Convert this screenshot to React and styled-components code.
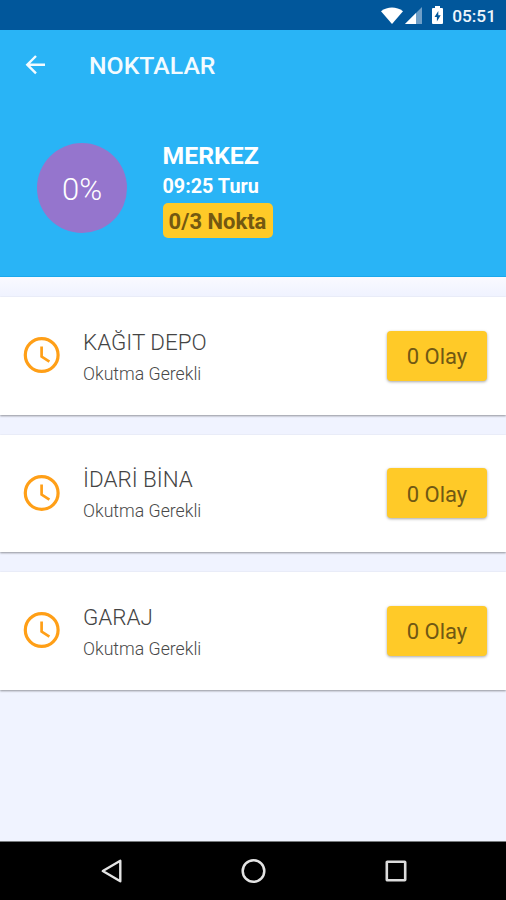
import styled, { createGlobalStyle } from 'styled-components';

const GlobalStyle = createGlobalStyle`
  * {
    box-sizing: border-box;
  }
  body {
    margin: 0;
    font-family: Roboto, 'Liberation Sans', sans-serif;
  }
`;

const Screen = styled.div`
  display: flex;
  flex-direction: column;
  width: 506px;
  height: 900px;
  overflow: hidden;
  background-color: #f0f3ff;
`;

const StatusBar = styled.div`
  display: flex;
  flex: none;
  align-items: center;
  justify-content: flex-end;
  height: 30px;
  padding: 0 10px 0 0;
  background-color: #01579b;
`;

const StatusIcon = styled.svg`
  display: block;
  margin-right: ${({ $gap }) => $gap}px;
`;

const StatusTime = styled.span`
  padding-top: 2px;
  font-size: 17.3px;
  font-weight: 500;
  line-height: 20px;
  color: #eef5fb;
`;

const Header = styled.header`
  flex: none;
  height: 247px;
  background-color: #29b4f6;
  border-bottom: 1px solid #1ba8ec;
`;

const Toolbar = styled.div`
  display: flex;
  align-items: center;
  height: 70px;
  padding-left: 25px;
`;

const Title = styled.h1`
  margin: 1px 0 0 43px;
  font-size: 24.8px;
  font-weight: 500;
  line-height: 28px;
  color: #f3fbff;
`;

const Summary = styled.div`
  display: flex;
  padding: 42px 0 0 37px;
`;

const Percent = styled.div`
  display: flex;
  align-items: center;
  justify-content: center;
  width: 90px;
  height: 90px;
  margin-top: 1px;
  padding-top: 2px;
  border-radius: 50%;
  background-color: #9575cd;
  font-size: 31px;
  font-weight: 300;
  color: #fff;
`;

const Tour = styled.div`
  display: flex;
  flex-direction: column;
  align-items: flex-start;
  margin-left: 35.5px;
`;

const Place = styled.div`
  font-size: 24.8px;
  font-weight: 700;
  line-height: 28px;
  color: #fff;
`;

const TourTime = styled.div`
  margin: 5px 0 4px;
  font-size: 19.8px;
  font-weight: 700;
  line-height: 24px;
  color: #fff;
`;

const Badge = styled.div`
  width: 110px;
  height: 35px;
  border-radius: 5px;
  background-color: #ffca28;
  font-size: 22px;
  font-weight: 700;
  line-height: 37px;
  text-align: center;
  color: #745811;
`;

const List = styled.main`
  display: flex;
  flex: 1;
  flex-direction: column;
  gap: 20px;
  padding-top: 20px;
  background: linear-gradient(#fafaff 0, #f0f3ff 18px);
`;

const Card = styled.div`
  display: flex;
  flex: none;
  align-items: center;
  height: 117.5px;
  padding: 0 19px 0 23px;
  background-color: #fff;
  box-shadow: 0 1px 2px rgba(0, 0, 0, 0.4);
`;

const CardText = styled.div`
  flex: 1;
  margin: 2px 0 0 23px;
`;

const CardTitle = styled.div`
  font-size: 22.4px;
  font-weight: 300;
  line-height: 28px;
  color: #444;
`;

const CardNote = styled.div`
  margin-top: 6px;
  font-size: 17.7px;
  font-weight: 300;
  line-height: 24px;
  color: #4a4a4a;
`;

const EventButton = styled.button`
  width: 100px;
  height: 50px;
  padding: 2px 0 0;
  border: none;
  border-radius: 4px;
  background-color: #ffca28;
  box-shadow: 0 1px 3px rgba(0, 0, 0, 0.35);
  font-family: inherit;
  font-size: 22px;
  color: #705814;
`;

const NavBar = styled.nav`
  display: flex;
  flex: none;
  align-items: center;
  justify-content: space-between;
  height: 59px;
  padding: 0 98px 0 99px;
  border-top: 1px solid #777b7d;
  background-color: #000;
`;

const points = [
  { name: 'KAĞIT DEPO', note: 'Okutma Gerekli', events: 0 },
  { name: 'İDARİ BİNA', note: 'Okutma Gerekli', events: 0 },
  { name: 'GARAJ', note: 'Okutma Gerekli', events: 0 },
];

const BackArrow = () => (
  <svg width="21" height="20" viewBox="0 0 21 20" fill="none" stroke="#f3fbff" strokeWidth="2.4">
    <path d="M20 9.7H2M11 1L2.3 9.7l8.7 8.7" />
  </svg>
);

const Clock = () => (
  <svg width="37" height="37" viewBox="0 0 37 37" fill="none" stroke="#ff9f17">
    <circle cx="18.7" cy="18" r="16.4" strokeWidth="3.2" />
    <path d="M18.6 9.4v10.2l7.8 5" strokeWidth="2.7" />
  </svg>
);

const StatusIcons = () => (
  <>
    <StatusIcon $gap={2} width="22" height="17" viewBox="0 0 22 17" fill="#fff">
      <path d="M0 4.2C6.5-.6 15.5-.6 22 4.2L11 17z" />
    </StatusIcon>
    <StatusIcon $gap={10} width="17" height="17" viewBox="0 0 17 17">
      <path d="M0 17L17 0v17z" fill="#6f9fc8" />
      <path d="M0 17L11 6v11z" fill="#fff" />
    </StatusIcon>
    <StatusIcon $gap={9} width="11" height="18" viewBox="0 0 11 18">
      <path d="M3 2V0h5v2h2q1 0 1 1v14q0 1-1 1H1q-1 0-1-1V3q0-1 1-1z" fill="#fff" />
      <path d="M6.3 5L2.5 11h2.4v4.5L8.7 9.3H6.3z" fill="#01579b" />
    </StatusIcon>
  </>
);

const PointCard = ({ point }) => (
  <Card>
    <Clock />
    <CardText>
      <CardTitle>{point.name}</CardTitle>
      <CardNote>{point.note}</CardNote>
    </CardText>
    <EventButton>{point.events} Olay</EventButton>
  </Card>
);

const App = () => {
  return (
    <Screen>
      <GlobalStyle />
      <StatusBar>
        <StatusIcons />
        <StatusTime>05:51</StatusTime>
      </StatusBar>
      <Header>
        <Toolbar>
          <BackArrow />
          <Title>NOKTALAR</Title>
        </Toolbar>
        <Summary>
          <Percent>0%</Percent>
          <Tour>
            <Place>MERKEZ</Place>
            <TourTime>09:25 Turu</TourTime>
            <Badge>0/3 Nokta</Badge>
          </Tour>
        </Summary>
      </Header>
      <List>
        {points.map(point => (
          <PointCard key={point.name} point={point} />
        ))}
      </List>
      <NavBar>
        <svg width="24" height="26" viewBox="0 0 24 26" fill="none" stroke="#e4e4e4" strokeWidth="2.4">
          <path d="M21.3 2.8v20.4L3.8 13z" strokeLinejoin="round" />
        </svg>
        <svg width="26" height="26" viewBox="0 0 26 26" fill="none" stroke="#e4e4e4" strokeWidth="2.5">
          <circle cx="12.5" cy="13" r="10.8" />
        </svg>
        <svg width="24" height="24" viewBox="0 0 24 24" fill="none" stroke="#dcdcdc" strokeWidth="2.6">
          <rect x="2.8" y="2.8" width="18.4" height="18.4" rx="0.5" />
        </svg>
      </NavBar>
    </Screen>
  );
};

export default App;
